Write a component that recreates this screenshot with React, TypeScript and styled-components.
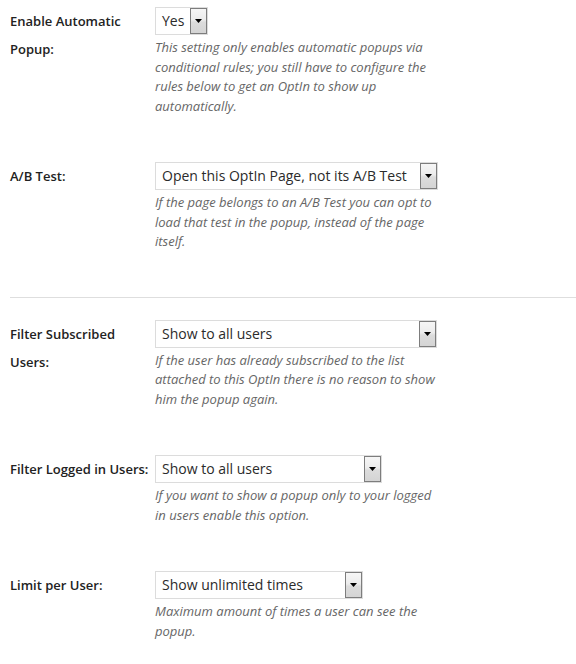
import React from "react";
import styled, { createGlobalStyle } from "styled-components";

const GlobalStyle = createGlobalStyle`
  html, body {
    margin: 0;
    padding: 0;
    background: #ffffff;
  }
  body {
    font-family: "Open Sans", "Noto Sans", sans-serif;
    color: #222222;
  }
`;

const Form = styled.div`
  display: flex;
  flex-direction: column;
  width: 576px;
`;

const Row = styled.div`
  display: grid;
  grid-template-columns: 145px 1fr;
  padding: 7px 0 39px 10px;
`;

const Label = styled.div`
  font-size: 13px;
  font-weight: 600;
  line-height: 28px;
  color: #222222;
  padding-right: 4px;
`;

const Field = styled.div`
  display: flex;
  flex-direction: column;
  align-items: flex-start;
`;

const SelectBox = styled.div<{ $w: number }>`
  box-sizing: border-box;
  width: ${(p) => p.$w}px;
  height: 28px;
  border: 1px solid #dcdcdc;
  background: #ffffff;
  display: flex;
  align-items: center;
  padding-left: 6px;
  font-size: 14px;
  color: #2b2b2b;
  white-space: nowrap;
`;

const SelectText = styled.span`
  flex: 1;
  line-height: 26px;
`;

const ArrowButton = styled.div`
  box-sizing: border-box;
  width: 17px;
  height: 26px;
  border: 1px solid #7d7d7d;
  background: linear-gradient(#f6f6f6 0%, #ececec 45%, #dcdcdc 55%, #d4d4d4 100%);
  display: flex;
  align-items: center;
  justify-content: center;
`;

const Description = styled.p`
  margin: 3px 0 0;
  max-width: 284px;
  font-size: 13px;
  font-style: italic;
  line-height: 19.5px;
  color: #666666;
`;

const Divider = styled.hr`
  border: 0;
  height: 1px;
  background: #dedede;
  margin: 6px 0 15px 10px;
`;

const Arrow = () => (
  <svg width="7" height="4" viewBox="0 0 7 4">
    <path d="M0 0H7L3.5 4Z" fill="#000" />
  </svg>
);

const Select = ({ value, width }: { value: string; width: number }) => (
  <SelectBox $w={width}>
    <SelectText>{value}</SelectText>
    <ArrowButton>
      <Arrow />
    </ArrowButton>
  </SelectBox>
);

type Setting = { label: string; value: string; width: number; desc: string };

const top: Setting[] = [
  {
    label: "Enable Automatic Popup:",
    value: "Yes",
    width: 53,
    desc: "This setting only enables automatic popups via conditional rules; you still have to configure the rules below to get an OptIn to show up automatically.",
  },
  {
    label: "A/B Test:",
    value: "Open this OptIn Page, not its A/B Test",
    width: 283,
    desc: "If the page belongs to an A/B Test you can opt to load that test in the popup, instead of the page itself.",
  },
];

const bottom: Setting[] = [
  {
    label: "Filter Subscribed Users:",
    value: "Show to all users",
    width: 282,
    desc: "If the user has already subscribed to the list attached to this OptIn there is no reason to show him the popup again.",
  },
  {
    label: "Filter Logged in Users:",
    value: "Show to all users",
    width: 227,
    desc: "If you want to show a popup only to your logged in users enable this option.",
  },
  {
    label: "Limit per User:",
    value: "Show unlimited times",
    width: 208,
    desc: "Maximum amount of times a user can see the popup.",
  },
];

const SettingRow = ({ s }: { s: Setting }) => (
  <Row>
    <Label>{s.label}</Label>
    <Field>
      <Select value={s.value} width={s.width} />
      <Description>{s.desc}</Description>
    </Field>
  </Row>
);

export default function App() {
  return (
    <>
      <GlobalStyle />
      <Form>
        {top.map((s) => (
          <SettingRow key={s.label} s={s} />
        ))}
        <Divider />
        {bottom.map((s) => (
          <SettingRow key={s.label} s={s} />
        ))}
      </Form>
    </>
  );
}
